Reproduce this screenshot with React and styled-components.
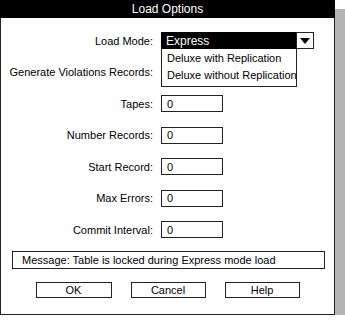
import React from "react";
import styled, { createGlobalStyle } from "styled-components";

const Global = createGlobalStyle`
  html, body { margin: 0; padding: 0; background: #fff; }
  body { font-family: "Liberation Sans", Arial, Helvetica, sans-serif; font-size: 11px; color: #000; }
`;

const Dialog = styled.div`
  box-sizing: border-box;
  width: 335px;
  height: 315px;
  border: 1px solid #222;
  background: #fff;
  box-shadow: 10px 9px 0 #b4b4b4;
  display: flex;
  flex-direction: column;
`;

const TitleBar = styled.div`
  height: 18px;
  margin: -1px -1px 0;
  background: #000;
  color: #fff;
  font-size: 12px;
  display: flex;
  align-items: center;
  justify-content: center;
`;

const Form = styled.div`
  display: grid;
  grid-template-columns: 152px 1fr;
  grid-auto-rows: 17px;
  column-gap: 8px;
  row-gap: 14.5px;
  padding-top: 14px;
`;

const Label = styled.div`
  display: flex;
  align-items: center;
  justify-content: flex-end;
  white-space: nowrap;
`;

const Field = styled.div`
  box-sizing: border-box;
  width: 62px;
  height: 17px;
  border: 1px solid #222;
  padding-left: 5px;
  display: flex;
  align-items: center;
`;

const Select = styled.div`
  position: relative;
  box-sizing: border-box;
  width: 153px;
  height: 17px;
  display: flex;
`;

const Face = styled.div`
  flex: 1;
  background: #000;
  color: #fff;
  padding-left: 5px;
  display: flex;
  align-items: center;
  font-size: 12px;
`;

const ArrowBox = styled.div`
  box-sizing: border-box;
  width: 18px;
  border: 1px solid #222;
  background: #fff;
  display: flex;
  justify-content: center;
  padding-top: 5px;
`;

const List = styled.div`
  position: absolute;
  top: 17px;
  left: 0;
  box-sizing: border-box;
  width: 136px;
  border: 1px solid #222;
  border-top: none;
  background: #fff;
  z-index: 2;
  padding-bottom: 3px;
`;

const Option = styled.div`
  height: 17px;
  padding-left: 5px;
  display: flex;
  align-items: center;
  white-space: nowrap;
`;

const Message = styled.div`
  box-sizing: border-box;
  margin: 13px 0 0 11px;
  width: 313px;
  height: 18px;
  border: 1px solid #222;
  padding-left: 9px;
  display: flex;
  align-items: center;
`;

const Buttons = styled.div`
  display: flex;
  justify-content: center;
  gap: 19px;
  margin-top: 13px;
`;

const Button = styled.div`
  box-sizing: border-box;
  width: ${(p) => p.$w}px;
  height: 16px;
  border: 1px solid #222;
  display: flex;
  align-items: center;
  justify-content: center;
`;

const fields = ["Tapes", "Number Records", "Start Record", "Max Errors", "Commit Interval"];

export default function App() {
  return (
    <>
      <Global />
      <Dialog>
        <TitleBar>Load Options</TitleBar>
        <Form>
          <Label>Load Mode:</Label>
          <div>
            <Select>
              <Face>Express</Face>
              <ArrowBox>
                <svg width="10" height="6" viewBox="0 0 10 6">
                  <polygon points="0,0 10,0 5,6" fill="#000" />
                </svg>
              </ArrowBox>
              <List>
                <Option>Deluxe with Replication</Option>
                <Option>Deluxe without Replication</Option>
              </List>
            </Select>
          </div>
          <Label>Generate Violations Records:</Label>
          <div />
          {fields.map((f) => (
            <React.Fragment key={f}>
              <Label>{f}:</Label>
              <div>
                <Field>0</Field>
              </div>
            </React.Fragment>
          ))}
        </Form>
        <Message>Message: Table is locked during Express mode load</Message>
        <Buttons>
          <Button $w={76}>OK</Button>
          <Button $w={75}>Cancel</Button>
          <Button $w={75}>Help</Button>
        </Buttons>
      </Dialog>
    </>
  );
}
